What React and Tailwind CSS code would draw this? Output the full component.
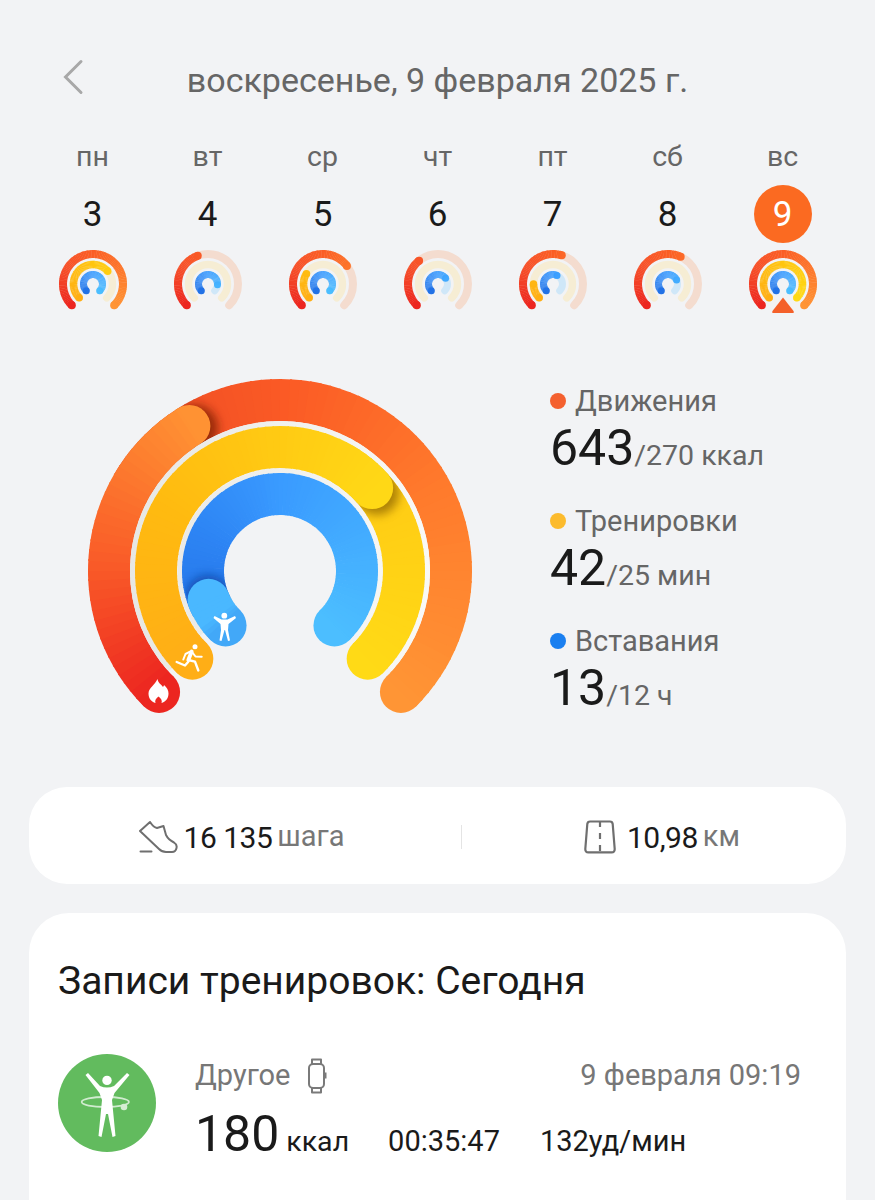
import React from 'react';

const font = { fontFamily: 'Roboto, "Noto Sans", sans-serif' };

function pt(cx, cy, r, a) {
  const t = (a * Math.PI) / 180;
  return [cx + r * Math.sin(t), cy - r * Math.cos(t)];
}

function arcPath(cx, cy, r, a0, a1) {
  const [x0, y0] = pt(cx, cy, r, a0);
  const [x1, y1] = pt(cx, cy, r, a1);
  const large = a1 - a0 > 180 ? 1 : 0;
  return `M${x0.toFixed(2)} ${y0.toFixed(2)}A${r} ${r} 0 ${large} 1 ${x1.toFixed(2)} ${y1.toFixed(2)}`;
}

function mix(stops, a) {
  let i = 0;
  while (i < stops.length - 2 && a > stops[i + 1][0]) i++;
  const [a0, c0] = stops[i];
  const [a1, c1] = stops[i + 1];
  const t = Math.min(1, Math.max(0, (a - a0) / (a1 - a0)));
  const ch = (c, n) => parseInt(c.slice(1 + n * 2, 3 + n * 2), 16);
  const v = [0, 1, 2].map((n) => Math.round(ch(c0, n) + (ch(c1, n) - ch(c0, n)) * t));
  return `rgb(${v.join(',')})`;
}

// gradient arc, drawn as short pieces with round caps at both ends
function GradArc({ cx, cy, r, w, from, to, stops, capStart = true, capEnd = true }) {
  const step = 3;
  const parts = [];
  for (let a = from; a < to; a += step) {
    const b = Math.min(to, a + step + 0.6);
    parts.push(<path key={a} d={arcPath(cx, cy, r, a, b)} stroke={mix(stops, a)} strokeWidth={w} fill="none" />);
  }
  const s = pt(cx, cy, r, from);
  const e = pt(cx, cy, r, to);
  return (
    <g>
      {capStart && <circle cx={s[0]} cy={s[1]} r={w / 2} fill={mix(stops, from)} />}
      {capEnd && <circle cx={e[0]} cy={e[1]} r={w / 2} fill={mix(stops, to)} />}
      {parts}
    </g>
  );
}

const red1 = [[-135, '#ec2620'], [-90, '#f95a28'], [-32, '#ff9233']];
const red2 = [[-60, '#e94a26'], [0, '#fb5a25'], [60, '#ff7a2c'], [135, '#ff9535']];
const redFull = [[-135, '#ec2620'], [-60, '#f6502a'], [0, '#fb5f25'], [135, '#ff9535']];
const yel1 = [[-135, '#ffae16'], [-60, '#ffbb10'], [48, '#ffd816']];
const yel2 = [[30, '#ffc814'], [135, '#ffda16']];
const blu1 = [[-135, '#42a8f8'], [-126, '#4ab8ff'], [-112, '#4ab8ff']];
const blu2 = [[-135, '#2372e6'], [-60, '#2e86f5'], [0, '#3a9bff'], [135, '#4cbeff']];

function BigRings() {
  const cx = 280;
  const cy = 571;
  return (
    <svg width="480" height="360" viewBox="40 370 480 360" className="block shrink-0">
      <defs>
        <filter id="soft" x="-50%" y="-50%" width="200%" height="200%">
          <feGaussianBlur stdDeviation="5" />
        </filter>
        <linearGradient id="gap" gradientUnits="userSpaceOnUse" x1="130" y1="0" x2="430" y2="0">
          <stop offset="0" stopColor="#e7e7e4" />
          <stop offset="1" stopColor="#f9f9f6" />
        </linearGradient>
        <clipPath id="outerClip">
          <path clipRule="evenodd" d="M88 571a192 192 0 1 0 384 0a192 192 0 1 0 -384 0ZM130 571a150 150 0 1 0 300 0a150 150 0 1 0 -300 0Z" />
        </clipPath>
        <clipPath id="midClip">
          <path clipRule="evenodd" d="M135 571a145 145 0 1 0 290 0a145 145 0 1 0 -290 0ZM177 571a103 103 0 1 0 206 0a103 103 0 1 0 -206 0Z" />
        </clipPath>
        <clipPath id="inClip">
          <path clipRule="evenodd" d="M183 571a97 97 0 1 0 194 0a97 97 0 1 0 -194 0ZM224 571a56 56 0 1 0 112 0a56 56 0 1 0 -112 0Z" />
        </clipPath>
      </defs>

      {/* outer ring, the lap goes on top */}
      <GradArc cx={cx} cy={cy} r={171} w={42} from={-60} to={135} stops={red2} capStart={false} />
      <g clipPath="url(#outerClip)">
        <circle cx="195" cy="428" r="23" fill="#7a1c05" opacity="0.75" filter="url(#soft)" />
      </g>
      <GradArc cx={cx} cy={cy} r={171} w={42} from={-135} to={-32} stops={red1} />

      {/* pale separators */}
      <path d={arcPath(cx, cy, 147.5, -132, 132)} stroke="url(#gap)" strokeWidth="5" fill="none" />
      <path d={arcPath(cx, cy, 100, -129, 129)} stroke="url(#gap)" strokeWidth="5" fill="none" />

      {/* middle ring */}
      <GradArc cx={cx} cy={cy} r={124} w={42} from={30} to={135} stops={yel2} capStart={false} />
      <g clipPath="url(#midClip)">
        <circle cx="377" cy="493" r="22" fill="#8a6200" opacity="0.7" filter="url(#soft)" />
      </g>
      <GradArc cx={cx} cy={cy} r={124} w={42} from={-135} to={48} stops={yel1} />

      {/* inner ring */}
      <GradArc cx={cx} cy={cy} r={77} w={42} from={-118} to={135} stops={blu2} capStart={false} />
      <g clipPath="url(#inClip)">
        <circle cx="208" cy="597" r="22" fill="#0b3f9c" opacity="0.7" filter="url(#soft)" />
      </g>
      <GradArc cx={cx} cy={cy} r={77} w={42} from={-135} to={-112} stops={blu1} />

      {/* flame */}
      <path
        d="M157.500 679C158 683 161 684 163 687C163.800 686 164 685.500 164 685C167 687.500 168.500 690.500 168.500 693.500C168.500 698.500 165.500 702 161.500 703C162.500 700.500 161 698.500 158.500 696.500C156 698.500 154.500 700.500 155.500 703C151.500 702 148.500 698.500 148.500 693.500C148.500 688 155 685 157.500 679Z"
        fill="#fff"
      />
      {/* runner */}
      <g fill="none" stroke="#fff" strokeLinecap="round" strokeLinejoin="round">
        <circle cx="195" cy="646.700" r="2.500" fill="#fff" stroke="none" />
        <path d="M191.700 651.500L188.300 660" strokeWidth="3.800" />
        <path d="M191.700 651.700L195.500 656.500L201.700 656.700" strokeWidth="2" />
        <path d="M190 651.700L185.500 654L183.300 659.500" strokeWidth="2" />
        <path d="M188.300 660L195 661.700L198.300 670.500" strokeWidth="2.400" />
        <path d="M188.300 661.700L185 665.500L176.700 662" strokeWidth="2.400" />
      </g>
      {/* person with raised arms */}
      <circle cx="224.300" cy="615.700" r="2.900" fill="#fff" />
      <path
        d="M214.500 616L221.500 619.500H227.500L235 616L236 618L228.500 624L228 630L230 640.500L228 641L225 630H224.500L221.500 641L219.500 640.500L221 630L220.500 624L213.500 618Z"
        fill="#fff"
      />
    </svg>
  );
}

function MiniRing({ outer, mid, inner, marker }) {
  const cx = 42;
  const cy = 40;
  return (
    <svg width="84" height="70" viewBox="0 0 84 70" className="block">
      <path d={arcPath(cx, cy, 30, -135, 135)} stroke="#f4dccf" strokeWidth="8" strokeLinecap="round" fill="none" />
      <path d={arcPath(cx, cy, 19.5, -135, 135)} stroke="#f6edd4" strokeWidth="7.500" strokeLinecap="round" fill="none" />
      <path d={arcPath(cx, cy, 9.5, -135, 135)} stroke="#cfe7f8" strokeWidth="7" strokeLinecap="round" fill="none" />
      {outer > -135 && <GradArc cx={cx} cy={cy} r={30} w={8} from={-135} to={outer} stops={redFull} />}
      {mid > -135 && <GradArc cx={cx} cy={cy} r={19.5} w={7.5} from={-135} to={mid} stops={[[-135, '#ffae16'], [0, '#ffc60f'], [135, '#ffda16']]} />}
      {inner > -135 && <GradArc cx={cx} cy={cy} r={9.5} w={7} from={-135} to={inner} stops={blu2} />}
      {marker && <path d="M42 54.500l10.500 13.500q1 2-1 2h-19q-2 0-1-2z" fill="#f4602a" transform="translate(0 -1)" />}
    </svg>
  );
}

const days = [
  { name: 'пн', n: 3, outer: 135, mid: 49, inner: 135 },
  { name: 'вт', n: 4, outer: -20, mid: -135, inner: 95 },
  { name: 'ср', n: 5, outer: 53, mid: -58, inner: 135 },
  { name: 'чт', n: 6, outer: -39, mid: -135, inner: 53 },
  { name: 'пт', n: 7, outer: 17, mid: -90, inner: 25 },
  { name: 'сб', n: 8, outer: 25, mid: -135, inner: 65 },
  { name: 'вс', n: 9, outer: 135, mid: 135, inner: 135, active: true },
];

const legend = [
  { dot: 'bg-[#f4602f]', title: 'Движения', value: '643', goal: '/270 ккал' },
  { dot: 'bg-[#fcbb2d]', title: 'Тренировки', value: '42', goal: '/25 мин' },
  { dot: 'bg-[#1a7ff0]', title: 'Вставания', value: '13', goal: '/12 ч' },
];

function ShoeIcon() {
  return (
    <svg width="40" height="34" viewBox="-1 -1 40 34" fill="none" stroke="#6f6f6f" strokeWidth="2" strokeLinecap="round" strokeLinejoin="round">
      <path d="M1 10L11 1C13 4 15.500 6.500 18 7L24.500 5L27 14C29 18 32 20 35 21.500C37.500 23 38 25 37.500 27C37 29.500 35.500 31 33 31H27C24 31 22 30 20 28L1 10Z" />
      <path d="M1.500 30.500H12.500" />
    </svg>
  );
}

function RoadIcon() {
  return (
    <svg width="36" height="34" viewBox="0 0 36 34" fill="none" stroke="#6f6f6f" strokeWidth="2.200" strokeLinejoin="round">
      <path d="M8 1.500h20c1.500 0 2.500 1 2.700 2.500l2 25c.100 2-1 3.300-3 3.300H6.300c-2 0-3.100-1.300-3-3.300l2-25C5.500 2.500 6.500 1.500 8 1.500z" />
      <path d="M18 2v5M18 13v6M18 25v6" />
    </svg>
  );
}

function BandIcon() {
  return (
    <svg width="20" height="36" viewBox="0 0 20 36" fill="none" stroke="#7a7a7a" strokeWidth="2" strokeLinejoin="round">
      <path d="M5 6V1.500h9V6M5 30v4.500h9V30" />
      <rect x="2" y="6" width="15" height="24" rx="4" />
      <path d="M18.500 14.500v6" />
    </svg>
  );
}

function HoopIcon() {
  return (
    <svg width="98" height="98" viewBox="0 0 98 98" className="block">
      <circle cx="49" cy="49" r="49" fill="#62bb5e" />
      <circle cx="49" cy="26.400" r="4.700" fill="#fff" />
      <path
        d="M27.500 21L30 19L42 32Q49 35 56 32L69 19L71.500 21L56.500 39L54 46L57.500 82L54.500 83L50 60H48L43.500 83L40.500 82L44 46L41.500 39Z"
        fill="#fff"
      />
      <ellipse cx="47.300" cy="48" rx="23.600" ry="5" fill="none" stroke="#fff" strokeWidth="1.800" opacity="0.7" />
      <circle cx="66" cy="53" r="3.300" fill="#d6eed4" />
    </svg>
  );
}

export default function App() {
  return (
    <div className="h-[1200px] w-[875px] overflow-hidden bg-[#f2f3f5]" style={font}>
      <div className="relative flex h-[116px] items-end justify-center pb-[16px]">
        <svg className="absolute left-[60px] top-[58px]" width="26" height="38" viewBox="0 0 26 38" fill="none" stroke="#a8a8a8" strokeWidth="3" strokeLinecap="round">
          <path d="M21 3.500L5.500 19 21 34.500" />
        </svg>
        <span className="text-[34px] leading-[40px] text-[#666666]">воскресенье, 9 февраля 2025 г.</span>
      </div>

      <div className="grid grid-cols-7 px-[35px]">
        {days.map((d) => (
          <div key={d.n} className="flex flex-col items-center">
            <span className="mt-[25px] text-[28.5px] leading-[32px] text-[#666666]">{d.name}</span>
            <div
              className={`mt-[12px] flex h-[58px] w-[58px] items-center justify-center rounded-full text-[35px] leading-none ${d.active ? 'bg-[#fb6a21] text-white' : 'text-[#1a1a1a]'}`}
            >
              {d.n}
            </div>
            <div className="mt-px">
              <MiniRing outer={d.outer} mid={d.mid} inner={d.inner} marker={d.active} />
            </div>
          </div>
        ))}
      </div>

      <div className="mt-[56px] flex items-start">
        <div className="ml-[40px]">
          <BigRings />
        </div>
        <div className="ml-[30px] flex flex-col pt-[12px]">
          {legend.map((l) => (
            <div key={l.title} className="mb-[17px] h-[103px]">
              <div className="flex items-center text-[29px] leading-[38px] text-[#666666]">
                <span className={`mr-[9px] h-[16px] w-[16px] rounded-full ${l.dot}`} />
                {l.title}
              </div>
              <div className="flex items-baseline leading-[56px]">
                <span className="text-[50px] text-[#1a1a1a]">{l.value}</span>
                <span className="text-[28.5px] text-[#666666]">{l.goal}</span>
              </div>
            </div>
          ))}
        </div>
      </div>

      <div className="mx-[29px] mt-[45px] flex h-[97px] items-center rounded-[38px] bg-white pt-[3px]">
        <div className="flex w-[432px] items-center justify-center pr-[8px]">
          <ShoeIcon />
          <span className="ml-[6px] text-[30px] tracking-[-0.5px] text-[#1a1a1a]">16 135</span>
          <span className="ml-[5px] text-[29px] text-[#777777]">шага</span>
        </div>
        <div className="h-[24px] w-px bg-[#e4e4e4]" />
        <div className="flex flex-1 items-center justify-center pl-[14px]">
          <RoadIcon />
          <span className="ml-[9px] text-[30px] tracking-[-0.5px] text-[#1a1a1a]">10,98</span>
          <span className="ml-[5px] text-[29px] text-[#777777]">км</span>
        </div>
      </div>

      <div className="mx-[29px] mt-[29px] h-[400px] rounded-[40px] bg-white px-[29px] pt-[44px]">
        <div className="text-[39px] leading-[48px] text-[#1a1a1a]">Записи тренировок: Сегодня</div>
        <div className="mt-[49px] flex">
          <HoopIcon />
          <div className="ml-[39px] flex-1 pr-[16px] pt-[2px]">
            <div className="flex h-[40px] items-center justify-between">
              <div className="flex items-center">
                <span className="text-[29px] text-[#777777]">Другое</span>
                <span className="ml-[17px]"><BandIcon /></span>
              </div>
              <span className="text-[29px] text-[#777777]">9 февраля 09:19</span>
            </div>
            <div className="mt-[10px] flex items-baseline">
              <span className="text-[50px] leading-[56px] text-[#1a1a1a]">180</span>
              <span className="ml-[7px] text-[28.5px] text-[#1a1a1a]">ккал</span>
              <span className="ml-[39px] text-[29px] text-[#1a1a1a]">00:35:47</span>
              <span className="ml-[40px] text-[29px] text-[#1a1a1a]">132уд/мин</span>
            </div>
          </div>
        </div>
      </div>
    </div>
  );
}
